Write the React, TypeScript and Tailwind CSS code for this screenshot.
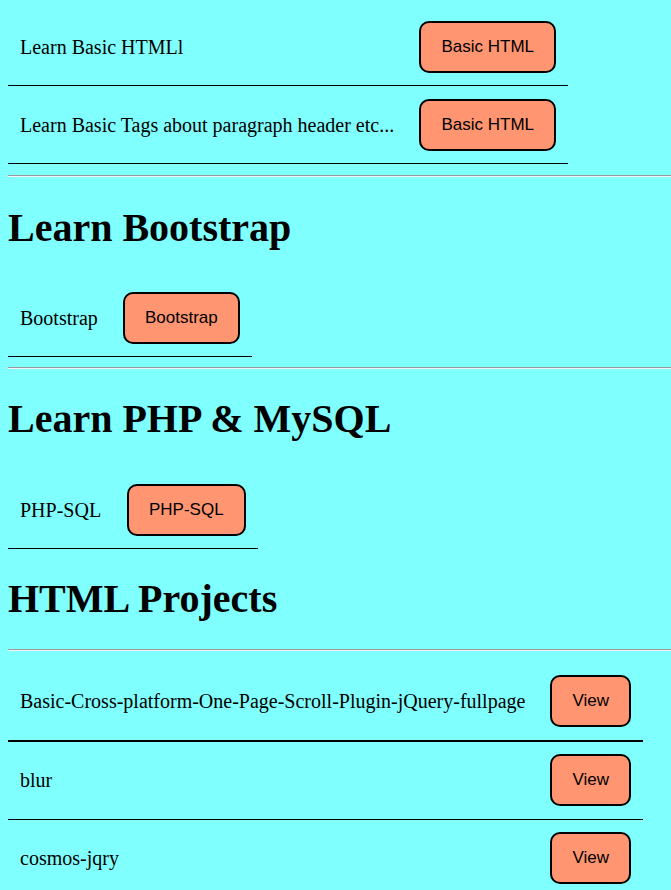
const serif = "font-['Liberation_Serif','Times_New_Roman',serif]";

type Row = { label: string; action: string };

const basics: Row[] = [
  { label: 'Learn Basic HTMLl', action: 'Basic HTML' },
  { label: 'Learn Basic Tags about paragraph header etc...', action: 'Basic HTML' },
];

const projects: Row[] = [
  { label: 'Basic-Cross-platform-One-Page-Scroll-Plugin-jQuery-fullpage', action: 'View' },
  { label: 'blur', action: 'View' },
  { label: 'cosmos-jqry', action: 'View' },
];

function ActionButton({ children }: { children: string }) {
  return (
    <button className="block whitespace-nowrap rounded-[10px] border-2 border-black bg-[#ff9571] px-5 py-[14px] font-['Liberation_Sans',Arial,sans-serif] text-[17px] leading-[20px] text-black">
      {children}
    </button>
  );
}

function Divider({ className = '' }: { className?: string }) {
  return <hr className={`h-0 border-0 border-t border-b border-t-[#9a9a9a] border-b-[#f4f4f4] ${className}`} />;
}

function Heading({ children, className = '' }: { children: string; className?: string }) {
  return <h1 className={`${serif} text-[40px] font-bold leading-[44px] text-black ${className}`}>{children}</h1>;
}

export default function App() {
  return (
    <div className={`min-h-screen bg-[#80ffff] pl-2 pt-2 ${serif} text-[20px] text-black`}>
      <table className="w-[560px]">
        <tbody>
          {basics.map((r, i) => (
            <tr key={i} className="border-b border-black">
              <td className="w-[400px] px-3 py-[12.5px]">{r.label}</td>
              <td className="px-3 py-[12.5px]">
                <ActionButton>{r.action}</ActionButton>
              </td>
            </tr>
          ))}
        </tbody>
      </table>

      <Divider className="mt-[11px]" />

      <Heading className="mt-[29px] mb-[29px]">Learn Bootstrap</Heading>
      <table>
        <tbody>
          <tr className="border-b border-black">
            <td className="w-[103px] px-3 py-[12.5px]">Bootstrap</td>
            <td className="px-3 py-[12.5px]">
              <ActionButton>Bootstrap</ActionButton>
            </td>
          </tr>
        </tbody>
      </table>

      <Divider className="mt-[10px]" />

      <Heading className="mt-[28px] mb-[30px]">Learn PHP &amp; MySQL</Heading>
      <table>
        <tbody>
          <tr className="border-b border-black">
            <td className="w-[107px] px-3 py-[12.5px]">PHP-SQL</td>
            <td className="px-3 py-[12.5px]">
              <ActionButton>PHP-SQL</ActionButton>
            </td>
          </tr>
        </tbody>
      </table>

      <Heading className="mt-[28px] mb-[28px]">HTML Projects</Heading>
      <Divider />

      <table className="mt-[11.5px] w-[635px]">
        <tbody>
          {projects.map((r, i) => (
            <tr key={i} className={i === 0 ? 'border-b-2 border-black' : 'border-b border-black'}>
              <td className="w-[531px] px-3 py-[12.5px]">{r.label}</td>
              <td className="px-3 py-[12.5px]">
                <ActionButton>{r.action}</ActionButton>
              </td>
            </tr>
          ))}
        </tbody>
      </table>
    </div>
  );
}
